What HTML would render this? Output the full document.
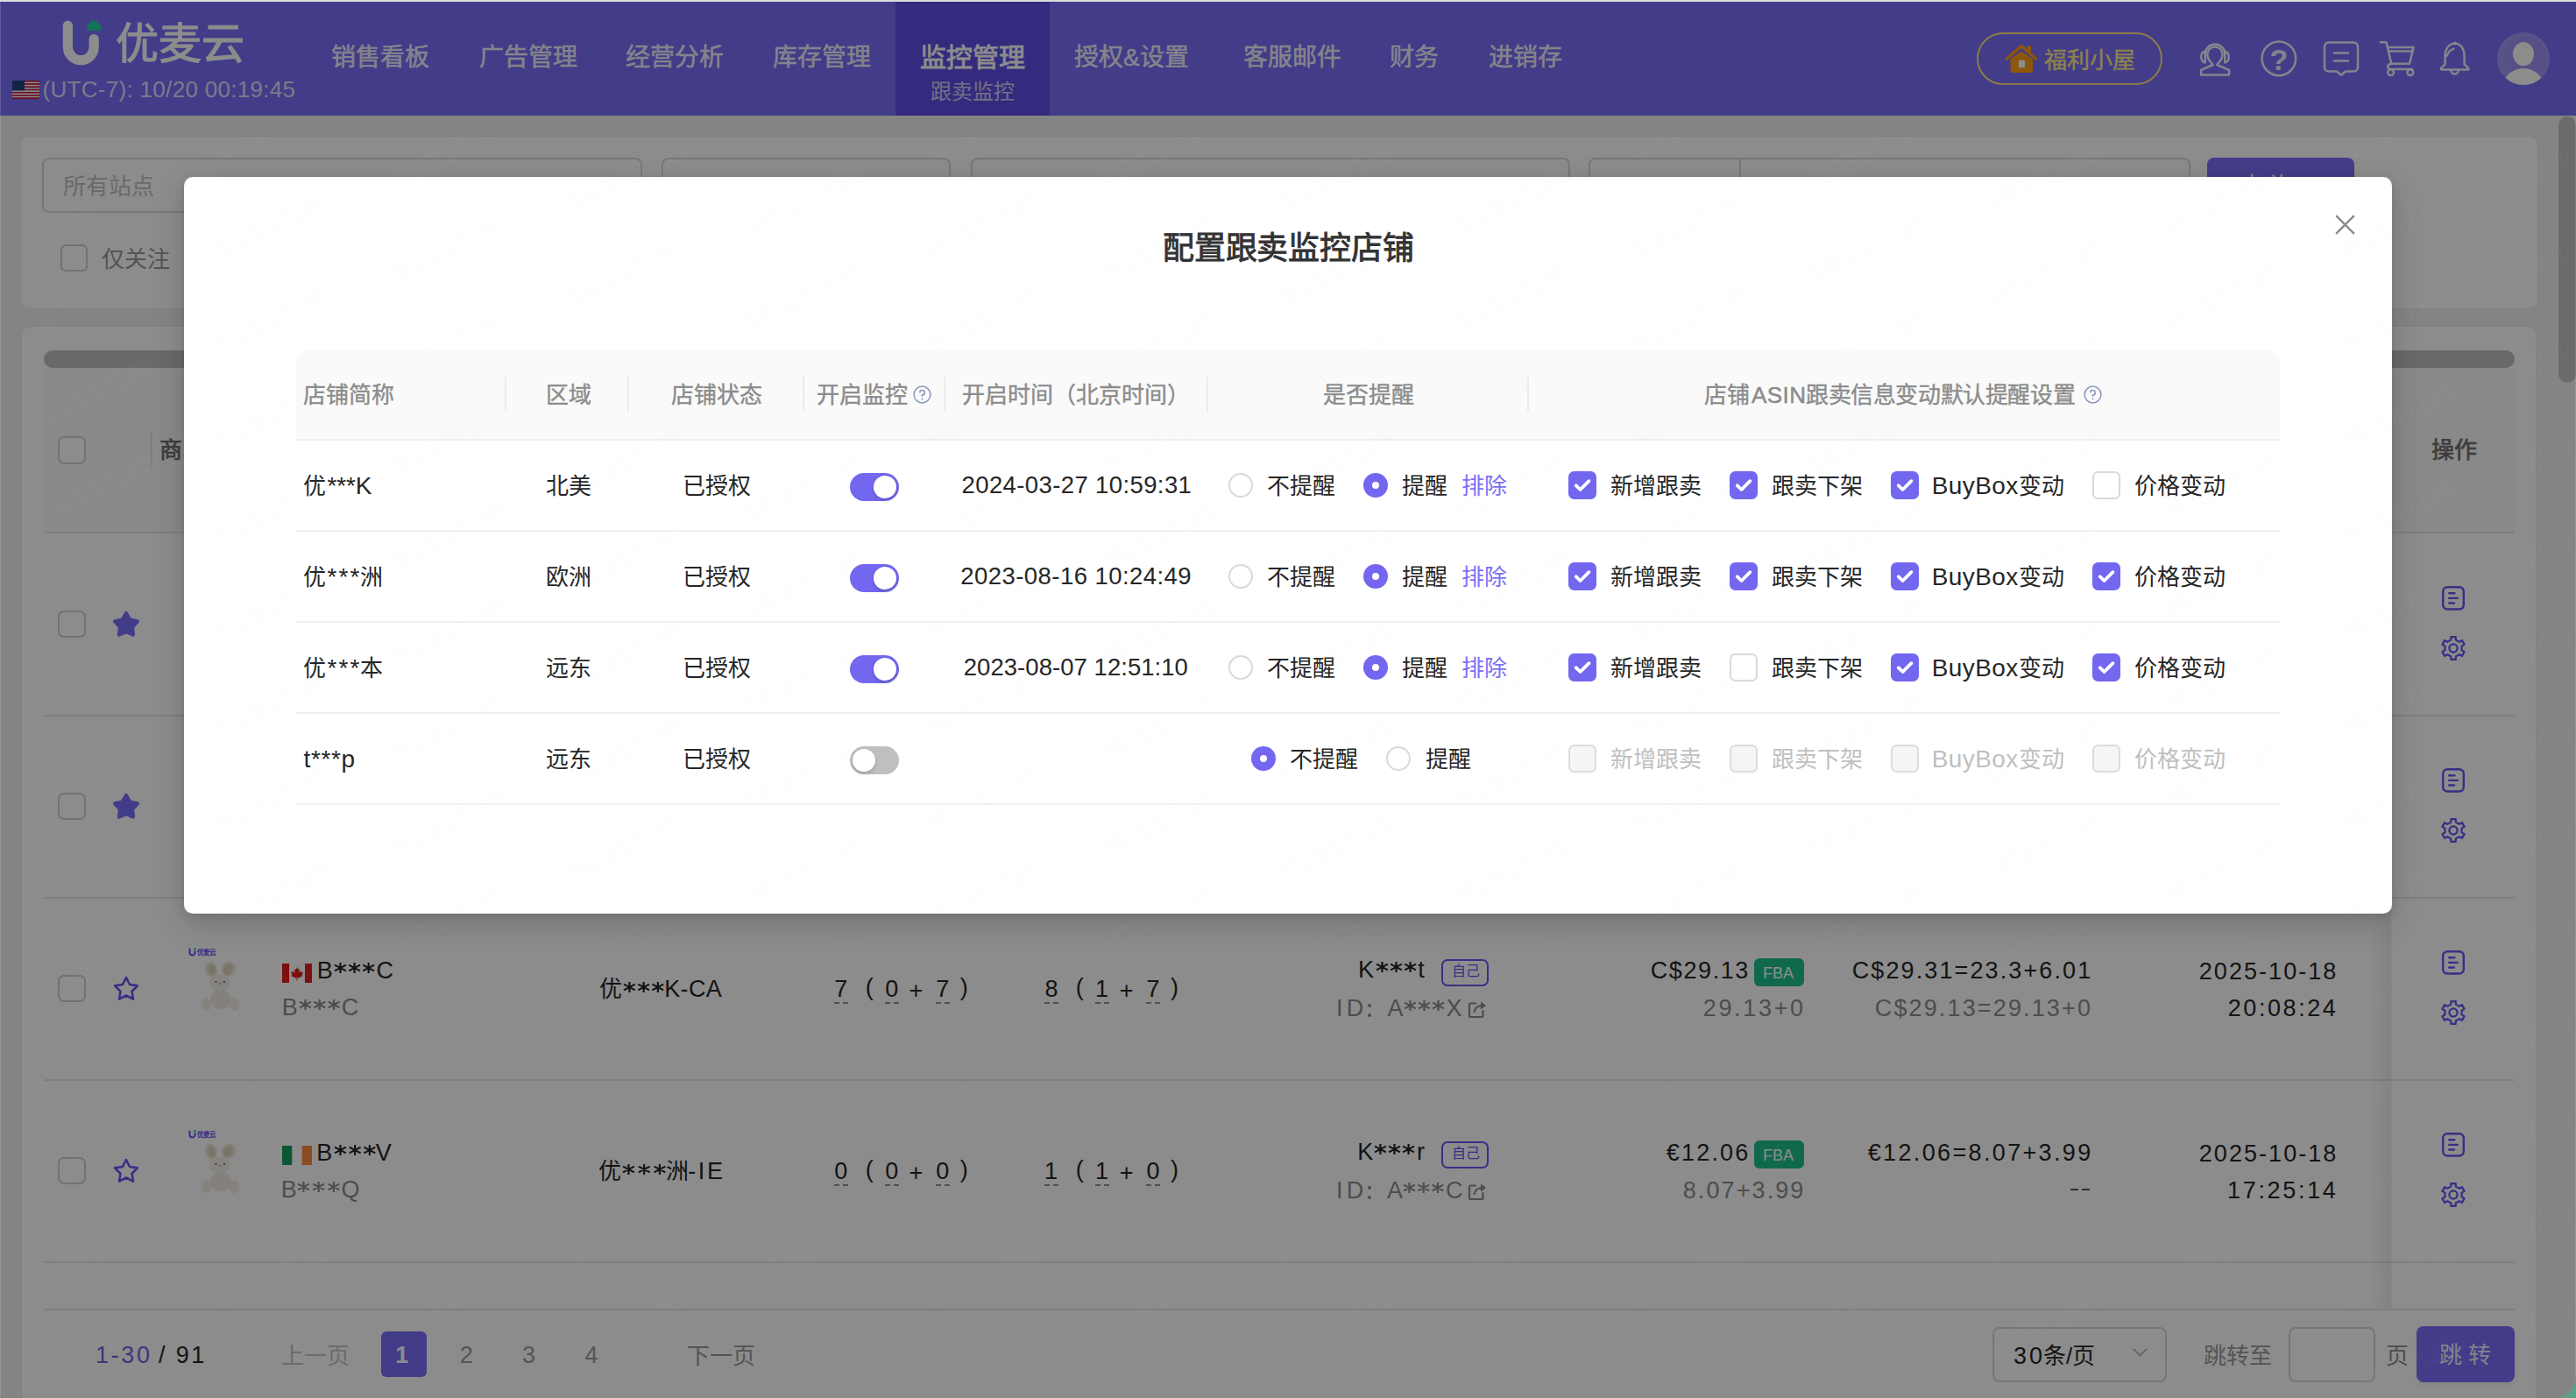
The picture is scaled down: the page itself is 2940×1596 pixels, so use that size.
<!DOCTYPE html>
<html lang="zh-CN"><head><meta charset="utf-8"><title>配置跟卖监控店铺</title><style>
*{margin:0;padding:0;box-sizing:border-box}
html,body{width:2940px;height:1596px;overflow:hidden}
body{position:relative;background:#f1f1f1;font-family:"Liberation Sans",sans-serif;color:#262626}
.a{position:absolute;white-space:nowrap}
svg.a{overflow:visible}
.wm{position:absolute;font-size:28px;line-height:28px;color:rgba(215,215,215,.045);transform:rotate(-25.5deg);transform-origin:0 24px;white-space:nowrap}
</style></head>
<body>
<div class="a" style="left:0px;top:0px;width:2940px;height:132px;background:#7a6ef8"></div>
<div class="a" style="left:1022px;top:0px;width:176px;height:132px;background:#5f4fe6"></div>
<svg class="a" style="left:60px;top:18px" width="60" height="60" viewBox="0 0 60 60"><path d="M17.4 11.1 V35.8 A14.9 14.9 0 0 0 47.2 35.8 V26.5" fill="none" stroke="#fff" stroke-width="11.2" stroke-linecap="round"/><g fill="#22cfa0"><circle cx="43.3" cy="12.8" r="4.2"/><circle cx="47.3" cy="10" r="4.9"/><circle cx="51.3" cy="12.8" r="4.2"/><rect x="39.5" y="12.5" width="15.5" height="4.6" rx="2"/></g></svg>
<div class="a" style="left:132px;top:26px;font-size:49px;line-height:49px;color:#fff;font-weight:400;-webkit-text-stroke:1.2px #fff">优麦云</div>
<svg class="a" style="left:14px;top:92px" width="31" height="21" viewBox="0 0 31 21"><rect x="0" y="0.00" width="31" height="1.67" fill="#d0112b"/><rect x="0" y="1.62" width="31" height="1.67" fill="#fff"/><rect x="0" y="3.23" width="31" height="1.67" fill="#d0112b"/><rect x="0" y="4.85" width="31" height="1.67" fill="#fff"/><rect x="0" y="6.46" width="31" height="1.67" fill="#d0112b"/><rect x="0" y="8.08" width="31" height="1.67" fill="#fff"/><rect x="0" y="9.69" width="31" height="1.67" fill="#d0112b"/><rect x="0" y="11.31" width="31" height="1.67" fill="#fff"/><rect x="0" y="12.92" width="31" height="1.67" fill="#d0112b"/><rect x="0" y="14.54" width="31" height="1.67" fill="#fff"/><rect x="0" y="16.15" width="31" height="1.67" fill="#d0112b"/><rect x="0" y="17.77" width="31" height="1.67" fill="#fff"/><rect x="0" y="19.38" width="31" height="1.67" fill="#d0112b"/><rect x="0" y="0" width="14" height="11.3" fill="#23407f"/></svg>
<div class="a" style="left:48.50px;top:88.88px;font-size:26px;line-height:26px;color:rgba(255,255,255,.8);font-weight:400;letter-spacing:0.307px;">(UTC-7): 10/20 00:19:45</div>
<div class="a" style="left:378px;top:52px;font-size:28px;line-height:28px;color:rgba(255,255,255,.88);font-weight:400;-webkit-text-stroke:0.5px rgba(255,255,255,.88)">销售看板</div>
<div class="a" style="left:547px;top:52px;font-size:28px;line-height:28px;color:rgba(255,255,255,.88);font-weight:400;-webkit-text-stroke:0.5px rgba(255,255,255,.88)">广告管理</div>
<div class="a" style="left:714px;top:52px;font-size:28px;line-height:28px;color:rgba(255,255,255,.88);font-weight:400;-webkit-text-stroke:0.5px rgba(255,255,255,.88)">经营分析</div>
<div class="a" style="left:882px;top:52px;font-size:28px;line-height:28px;color:rgba(255,255,255,.88);font-weight:400;-webkit-text-stroke:0.5px rgba(255,255,255,.88)">库存管理</div>
<div class="a" style="left:1226px;top:52px;font-size:28px;line-height:28px;color:rgba(255,255,255,.88);font-weight:400;-webkit-text-stroke:0.5px rgba(255,255,255,.88)">授权&amp;设置</div>
<div class="a" style="left:1419px;top:52px;font-size:28px;line-height:28px;color:rgba(255,255,255,.88);font-weight:400;-webkit-text-stroke:0.5px rgba(255,255,255,.88)">客服邮件</div>
<div class="a" style="left:1586px;top:52px;font-size:28px;line-height:28px;color:rgba(255,255,255,.88);font-weight:400;-webkit-text-stroke:0.5px rgba(255,255,255,.88)">财务</div>
<div class="a" style="left:1699px;top:52px;font-size:28px;line-height:28px;color:rgba(255,255,255,.88);font-weight:400;-webkit-text-stroke:0.5px rgba(255,255,255,.88)">进销存</div>
<div class="a" style="left:1050px;top:50.5px;font-size:30px;line-height:30px;color:#fff;font-weight:400;-webkit-text-stroke:0.8px #fff">监控管理</div>
<div class="a" style="left:1062px;top:93px;font-size:24px;line-height:24px;color:rgba(255,255,255,.72);font-weight:400;">跟卖监控</div>
<div class="a" style="left:2256px;top:37px;width:212px;height:60px;border:2.5px solid #ffe27f;border-radius:30px"></div>
<svg class="a" style="left:2288px;top:50px" width="38" height="34" viewBox="0 0 38 34"><path d="M6.6 17.6 L19.1 8.4 L32 17.6 V30.8 A2.2 2.2 0 0 1 29.8 33 H8.8 A2.2 2.2 0 0 1 6.6 30.8 Z" fill="#ff9d14"/><path d="M2.5 17 L19 2.5 L35.5 17" fill="none" stroke="#ff9d14" stroke-width="3.6" stroke-linecap="round" stroke-linejoin="round"/><rect x="25.5" y="2.3" width="4.5" height="8" rx="1" fill="#ff9d14"/><rect x="15.8" y="18.8" width="7.2" height="8.5" rx="1" fill="#fff"/></svg>
<div class="a" style="left:2333px;top:56px;font-size:26px;line-height:26px;color:#ffeb8a;font-weight:400;-webkit-text-stroke:0.4px #ffeb8a">福利小屋</div>
<svg class="a" style="left:2511px;top:47px" width="34" height="40" viewBox="0 0 34 40"><path fill="none" stroke="rgba(255,255,255,.9)" stroke-width="2.5" stroke-linecap="round" stroke-linejoin="round" d="M14.6 27 L10.2 21.5 Q8.3 18.5 8.3 15 A8.6 8.6 0 0 1 25.5 15 Q25.5 18.5 23.6 21.5 L19.3 27 L33 33 V38.5 H1 V33 Z"/><path fill="none" stroke="rgba(255,255,255,.9)" stroke-width="2.5" stroke-linecap="round" stroke-linejoin="round" d="M5.6 13.5 A11.5 11.5 0 0 1 28.4 13.5"/><path fill="none" stroke="rgba(255,255,255,.9)" stroke-width="2.5" stroke-linecap="round" stroke-linejoin="round" d="M5.8 11.8 Q1.2 12.5 1.2 18 Q1.2 23.6 5.8 24.4 Z M28.2 11.8 Q32.8 12.5 32.8 18 Q32.8 23.6 28.2 24.4 Z"/></svg>
<svg class="a" style="left:2580px;top:46px" width="42" height="42" viewBox="0 0 42 42"><circle fill="none" stroke="rgba(255,255,255,.9)" stroke-width="2.5" stroke-linecap="round" stroke-linejoin="round" cx="20.9" cy="20.85" r="19.3"/><text x="21" y="33.6" text-anchor="middle" font-family="Liberation Sans" font-weight="700" font-size="34" fill="rgba(255,255,255,.9)">?</text></svg>
<svg class="a" style="left:2652px;top:47px" width="41" height="40" viewBox="0 0 41 40"><path fill="none" stroke="rgba(255,255,255,.9)" stroke-width="2.5" stroke-linecap="round" stroke-linejoin="round" d="M5.5 1.5 H34.5 A4.5 4.5 0 0 1 39 6 V30 A4.5 4.5 0 0 1 34.5 34.5 H25 L20 38.7 L15 34.5 H5.5 A4.5 4.5 0 0 1 1 30 V6 A4.5 4.5 0 0 1 5.5 1.5 Z"/><path fill="none" stroke="rgba(255,255,255,.9)" stroke-width="2.5" stroke-linecap="round" stroke-linejoin="round" d="M12 13.6 H28 M12 22.5 H28"/></svg>
<svg class="a" style="left:2716px;top:47px" width="41" height="40" viewBox="0 0 41 40"><path fill="none" stroke="rgba(255,255,255,.9)" stroke-width="2.5" stroke-linecap="round" stroke-linejoin="round" d="M0.8 1.3 H7.5 L13.3 25.8 H34 L38.6 7 H9"/><path fill="none" stroke="rgba(255,255,255,.9)" stroke-width="2.5" stroke-linecap="round" stroke-linejoin="round" d="M10.3 11.6 H37.5"/><path fill="none" stroke="rgba(255,255,255,.9)" stroke-width="2.5" stroke-linecap="round" stroke-linejoin="round" d="M13.3 25.8 Q9.2 26.2 9.2 29 Q9.2 32 12.8 32 H37.3"/><circle fill="none" stroke="rgba(255,255,255,.9)" stroke-width="2.5" stroke-linecap="round" stroke-linejoin="round" cx="12.6" cy="35.7" r="3.4"/><circle fill="none" stroke="rgba(255,255,255,.9)" stroke-width="2.5" stroke-linecap="round" stroke-linejoin="round" cx="34.9" cy="35.7" r="3.4"/></svg>
<svg class="a" style="left:2785px;top:47px" width="34" height="40" viewBox="0 0 34 40"><path fill="none" stroke="rgba(255,255,255,.9)" stroke-width="2.5" stroke-linecap="round" stroke-linejoin="round" d="M16.6 2.6 C24 3, 27.6 9.5, 27.6 17 V26.5 L32 30.6 Q33 32 31.6 32.5 H1.6 Q0.2 32 1.2 30.6 L5.6 26.5 V17 C5.6 9.5, 9.2 3, 16.6 2.6 Z"/><path fill="none" stroke="rgba(255,255,255,.9)" stroke-width="2.5" stroke-linecap="round" stroke-linejoin="round" d="M12.6 33.6 A4 4 0 0 0 20.6 33.6"/><path fill="none" stroke="rgba(255,255,255,.9)" stroke-width="2.5" stroke-linecap="round" stroke-linejoin="round" d="M7.9 16.5 Q9.6 10.5 15.2 8.9"/><circle cx="16.6" cy="2.5" r="2" fill="rgba(255,255,255,.9)"/></svg>
<svg class="a" style="left:2850px;top:37px" width="60" height="60" viewBox="0 0 60 60"><defs><clipPath id="av"><circle cx="30" cy="30" r="30"/></clipPath></defs><circle cx="30" cy="30" r="30" fill="#a398f6"/><circle cx="32" cy="29" r="25" fill="#9e92f4"/><g clip-path="url(#av)"><ellipse cx="30" cy="24.6" rx="12" ry="13.5" fill="#fff"/><ellipse cx="30" cy="64" rx="24" ry="23" fill="#fff"/></g></svg>
<div class="a" style="left:24px;top:156px;width:2872px;height:196px;background:#fff;border-radius:10px;box-shadow:0 0 3px rgba(0,0,0,.06)"></div>
<div class="a" style="left:48px;top:180px;width:685px;height:63px;border:2px solid #d9d9d9;border-radius:8px;background:#fff"></div>
<div class="a" style="left:72px;top:200px;font-size:26px;line-height:26px;color:#bfbfbf;font-weight:400;">所有站点</div>
<div class="a" style="left:779px;top:200px;font-size:26px;line-height:26px;color:#bfbfbf;font-weight:400;">全部店铺</div>
<div class="a" style="left:1132px;top:200px;font-size:26px;line-height:26px;color:#bfbfbf;font-weight:400;">请输入内容</div>
<div class="a" style="left:1837px;top:200px;font-size:26px;line-height:26px;color:#bfbfbf;font-weight:400;">请选择</div>
<div class="a" style="left:755px;top:180px;width:330px;height:63px;border:2px solid #d9d9d9;border-radius:8px;background:#fff"></div>
<div class="a" style="left:1108px;top:180px;width:684px;height:63px;border:2px solid #d9d9d9;border-radius:8px;background:#fff"></div>
<div class="a" style="left:1813px;top:180px;width:687px;height:63px;border:2px solid #d9d9d9;border-radius:8px;background:#fff"></div>
<div class="a" style="left:1985px;top:182px;width:2px;height:59px;background:#d9d9d9"></div>
<div class="a" style="left:2519px;top:180px;width:168px;height:63px;background:#7a6ef8;border-radius:8px"></div>
<div class="a" style="left:2557px;top:199px;font-size:26px;line-height:26px;color:#fff;font-weight:400;">查&nbsp;询</div>
<div class="a" style="left:69px;top:279px;width:31px;height:31px;border:2px solid #d0d0d0;border-radius:6px;background:#fff"></div>
<div class="a" style="left:116px;top:283px;font-size:26px;line-height:26px;color:#999;font-weight:400;">仅关注</div>
<div class="a" style="left:25px;top:373px;width:2869px;height:1300px;background:#fff;border-radius:10px;box-shadow:0 0 3px rgba(0,0,0,.06)"></div>
<div class="a" style="left:50px;top:400px;width:2820px;height:20px;background:#c0c0c0;border-radius:10px"></div>
<div class="a" style="left:50px;top:420px;width:2820px;height:188px;background:#fafafa"></div>
<div class="a" style="left:66px;top:498px;width:32px;height:32px;border:2px solid #cfcfcf;border-radius:7px;background:#fff"></div>
<div class="a" style="left:172px;top:493px;width:2px;height:42px;background:#e3e3e3"></div>
<div class="a" style="left:182px;top:501px;font-size:26px;line-height:26px;color:#6e6e6e;font-weight:400;-webkit-text-stroke:0.7px #6e6e6e">商</div>
<div class="a" style="left:2775px;top:501px;font-size:26px;line-height:26px;color:#6e6e6e;font-weight:400;-webkit-text-stroke:0.7px #6e6e6e">操作</div>
<div class="a" style="left:50px;top:607px;width:2820px;height:2px;background:#e8e8e8"></div>
<div class="a" style="left:50px;top:816px;width:2820px;height:2px;background:#e8e8e8"></div>
<div class="a" style="left:50px;top:1024px;width:2820px;height:2px;background:#e8e8e8"></div>
<div class="a" style="left:50px;top:1232px;width:2820px;height:2px;background:#e8e8e8"></div>
<div class="a" style="left:50px;top:1440px;width:2820px;height:2px;background:#e8e8e8"></div>
<div class="a" style="left:50px;top:1494px;width:2820px;height:2px;background:#e8e8e8"></div>
<div class="a" style="left:2704px;top:420px;width:25px;height:1074px;background:linear-gradient(to left, rgba(0,0,0,.07), rgba(0,0,0,0))"></div>
<div class="a" style="left:2729px;top:420px;width:1px;height:1074px;background:rgba(0,0,0,.03)"></div>
<div class="a" style="left:66px;top:697px;width:32px;height:31px;border:2px solid #cfcfcf;border-radius:7px;background:#fff"></div>
<svg class="a" style="left:128px;top:697px" width="32" height="32" viewBox="0 0 32 32"><polygon fill="#7a6ef8" stroke="#7a6ef8" stroke-width="4.2" stroke-linejoin="round" points="16.00,3.00 20.35,10.61 28.93,12.40 23.04,18.89 23.99,27.60 16.00,24.00 8.01,27.60 8.96,18.89 3.07,12.40 11.65,10.61"/></svg>
<svg class="a" style="left:2787px;top:669px" width="26" height="28" viewBox="0 0 26 28"><rect fill="none" stroke="#6556f2" stroke-width="2.4" stroke-linecap="round" stroke-linejoin="round" x="1.2" y="1.2" width="23.6" height="25.3" rx="5"/><path fill="none" stroke="#6556f2" stroke-width="2.4" stroke-linecap="round" stroke-linejoin="round" d="M8.2 8.3 H14.4 M8.2 13.9 H17.8 M8.2 19.5 H14"/></svg>
<svg class="a" style="left:2786px;top:726px" width="28" height="28" viewBox="0 0 28 28"><polygon fill="none" stroke="#6556f2" stroke-width="2.3" stroke-linejoin="miter" points="11.13,4.63 11.48,1.04 16.52,1.04 16.87,4.63 20.68,6.83 23.96,5.34 26.48,9.70 23.55,11.80 23.55,16.20 26.48,18.30 23.96,22.66 20.68,21.17 16.87,23.37 16.52,26.96 11.48,26.96 11.13,23.37 7.32,21.17 4.04,22.66 1.52,18.30 4.45,16.20 4.45,11.80 1.52,9.70 4.04,5.34 7.32,6.83"/><circle fill="none" stroke="#6556f2" stroke-width="2.3" stroke-linejoin="miter" cx="14" cy="14" r="4.6"/></svg>
<div class="a" style="left:66px;top:905px;width:32px;height:31px;border:2px solid #cfcfcf;border-radius:7px;background:#fff"></div>
<svg class="a" style="left:128px;top:905px" width="32" height="32" viewBox="0 0 32 32"><polygon fill="#7a6ef8" stroke="#7a6ef8" stroke-width="4.2" stroke-linejoin="round" points="16.00,3.00 20.35,10.61 28.93,12.40 23.04,18.89 23.99,27.60 16.00,24.00 8.01,27.60 8.96,18.89 3.07,12.40 11.65,10.61"/></svg>
<svg class="a" style="left:2787px;top:877px" width="26" height="28" viewBox="0 0 26 28"><rect fill="none" stroke="#6556f2" stroke-width="2.4" stroke-linecap="round" stroke-linejoin="round" x="1.2" y="1.2" width="23.6" height="25.3" rx="5"/><path fill="none" stroke="#6556f2" stroke-width="2.4" stroke-linecap="round" stroke-linejoin="round" d="M8.2 8.3 H14.4 M8.2 13.9 H17.8 M8.2 19.5 H14"/></svg>
<svg class="a" style="left:2786px;top:934px" width="28" height="28" viewBox="0 0 28 28"><polygon fill="none" stroke="#6556f2" stroke-width="2.3" stroke-linejoin="miter" points="11.13,4.63 11.48,1.04 16.52,1.04 16.87,4.63 20.68,6.83 23.96,5.34 26.48,9.70 23.55,11.80 23.55,16.20 26.48,18.30 23.96,22.66 20.68,21.17 16.87,23.37 16.52,26.96 11.48,26.96 11.13,23.37 7.32,21.17 4.04,22.66 1.52,18.30 4.45,16.20 4.45,11.80 1.52,9.70 4.04,5.34 7.32,6.83"/><circle fill="none" stroke="#6556f2" stroke-width="2.3" stroke-linejoin="miter" cx="14" cy="14" r="4.6"/></svg>
<div class="a" style="left:66px;top:1113px;width:32px;height:31px;border:2px solid #cfcfcf;border-radius:7px;background:#fff"></div>
<svg class="a" style="left:128px;top:1113px" width="32" height="32" viewBox="0 0 32 32"><polygon fill="none" stroke="#6556f2" stroke-width="2.6" stroke-linejoin="round" points="16.00,3.00 20.06,11.02 28.93,12.40 22.56,18.73 23.99,27.60 16.00,23.50 8.01,27.60 9.44,18.73 3.07,12.40 11.94,11.02"/></svg>
<svg class="a" style="left:2787px;top:1085px" width="26" height="28" viewBox="0 0 26 28"><rect fill="none" stroke="#6556f2" stroke-width="2.4" stroke-linecap="round" stroke-linejoin="round" x="1.2" y="1.2" width="23.6" height="25.3" rx="5"/><path fill="none" stroke="#6556f2" stroke-width="2.4" stroke-linecap="round" stroke-linejoin="round" d="M8.2 8.3 H14.4 M8.2 13.9 H17.8 M8.2 19.5 H14"/></svg>
<svg class="a" style="left:2786px;top:1142px" width="28" height="28" viewBox="0 0 28 28"><polygon fill="none" stroke="#6556f2" stroke-width="2.3" stroke-linejoin="miter" points="11.13,4.63 11.48,1.04 16.52,1.04 16.87,4.63 20.68,6.83 23.96,5.34 26.48,9.70 23.55,11.80 23.55,16.20 26.48,18.30 23.96,22.66 20.68,21.17 16.87,23.37 16.52,26.96 11.48,26.96 11.13,23.37 7.32,21.17 4.04,22.66 1.52,18.30 4.45,16.20 4.45,11.80 1.52,9.70 4.04,5.34 7.32,6.83"/><circle fill="none" stroke="#6556f2" stroke-width="2.3" stroke-linejoin="miter" cx="14" cy="14" r="4.6"/></svg>
<div class="a" style="left:66px;top:1321px;width:32px;height:31px;border:2px solid #cfcfcf;border-radius:7px;background:#fff"></div>
<svg class="a" style="left:128px;top:1321px" width="32" height="32" viewBox="0 0 32 32"><polygon fill="none" stroke="#6556f2" stroke-width="2.6" stroke-linejoin="round" points="16.00,3.00 20.06,11.02 28.93,12.40 22.56,18.73 23.99,27.60 16.00,23.50 8.01,27.60 9.44,18.73 3.07,12.40 11.94,11.02"/></svg>
<svg class="a" style="left:2787px;top:1293px" width="26" height="28" viewBox="0 0 26 28"><rect fill="none" stroke="#6556f2" stroke-width="2.4" stroke-linecap="round" stroke-linejoin="round" x="1.2" y="1.2" width="23.6" height="25.3" rx="5"/><path fill="none" stroke="#6556f2" stroke-width="2.4" stroke-linecap="round" stroke-linejoin="round" d="M8.2 8.3 H14.4 M8.2 13.9 H17.8 M8.2 19.5 H14"/></svg>
<svg class="a" style="left:2786px;top:1350px" width="28" height="28" viewBox="0 0 28 28"><polygon fill="none" stroke="#6556f2" stroke-width="2.3" stroke-linejoin="miter" points="11.13,4.63 11.48,1.04 16.52,1.04 16.87,4.63 20.68,6.83 23.96,5.34 26.48,9.70 23.55,11.80 23.55,16.20 26.48,18.30 23.96,22.66 20.68,21.17 16.87,23.37 16.52,26.96 11.48,26.96 11.13,23.37 7.32,21.17 4.04,22.66 1.52,18.30 4.45,16.20 4.45,11.80 1.52,9.70 4.04,5.34 7.32,6.83"/><circle fill="none" stroke="#6556f2" stroke-width="2.3" stroke-linejoin="miter" cx="14" cy="14" r="4.6"/></svg>
<svg class="a" style="left:207px;top:1081px" width="70" height="78" viewBox="0 0 70 78"><path d="M9.5 2.5 V6.5 A3 3 0 0 0 15.5 6.5 V5" fill="none" stroke="#6556f2" stroke-width="2" stroke-linecap="round"/><circle cx="15.6" cy="2.2" r="1.3" fill="#22cfa0"/><text x="18" y="8.8" font-size="7.5" fill="#6556f2" font-weight="700">优麦云</text><ellipse cx="34" cy="25.7" rx="7" ry="8.8" fill="#ece6d8" transform="rotate(-15 34 25.7)"/><ellipse cx="54" cy="25" rx="7.8" ry="8.6" fill="#ece6d8" transform="rotate(25 54 25)"/><ellipse cx="34.5" cy="26.5" rx="4" ry="6" fill="#dcd2bd" transform="rotate(-15 34 25.7)"/><ellipse cx="53.5" cy="26" rx="4.5" ry="6" fill="#dcd2bd" transform="rotate(25 54 25)"/><ellipse cx="45" cy="60" rx="12" ry="11.3" fill="#f1ece2"/><ellipse cx="43.8" cy="41" rx="12.2" ry="9.8" fill="#f4f0e8"/><ellipse cx="28.4" cy="65.8" rx="5.8" ry="7.4" fill="#f3efe6"/><ellipse cx="60.6" cy="65.8" rx="5.8" ry="7.4" fill="#f3efe6"/><circle cx="39.5" cy="40" r="1" fill="#444"/><circle cx="49" cy="40" r="1" fill="#444"/><ellipse cx="44.3" cy="42" rx="1.8" ry="1" fill="#f0a0a8"/></svg>
<svg class="a" style="left:322px;top:1100px" width="34" height="22" viewBox="0 0 34 22"><rect width="34" height="22" fill="#fff"/><rect width="8" height="22" fill="#e01b1b"/><rect x="26" width="8" height="22" fill="#e01b1b"/><path d="M17 4 L18.3 7 L20 6.3 L19.4 10.5 L21.8 8.6 L22.3 10 L24 9.8 L22.6 13.3 L23.7 14 L19 16.5 L17.4 16 V19.5 H16.6 V16 L15 16.5 L10.3 14 L11.4 13.3 L10 9.8 L11.7 10 L12.2 8.6 L14.6 10.5 L14 6.3 L15.7 7 Z" fill="#e01b1b"/></svg>
<div class="a" style="left:361.65px;top:1094.72px;font-size:27px;line-height:27px;color:#262626">B</div>
<svg class="a" style="left:381.90px;top:1098.50px" width="45.1" height="12" viewBox="0 0 45.10 12"><path d="M6.45 0 V12 M0.05 2.6 L12.85 9.4 M0.05 9.4 L12.85 2.6 M22.55 0 V12 M16.15 2.6 L28.95 9.4 M16.15 9.4 L28.95 2.6 M38.65 0 V12 M32.25 2.6 L45.05 9.4 M32.25 9.4 L45.05 2.6" stroke="#262626" stroke-width="2.2" fill="none"/></svg>
<div class="a" style="left:429.55px;top:1094.72px;font-size:27px;line-height:27px;color:#262626">C</div>
<div class="a" style="left:321.75px;top:1136.72px;font-size:27px;line-height:27px;color:#8c8c8c">B</div>
<svg class="a" style="left:341.70px;top:1140.50px" width="45.5" height="12" viewBox="0 0 45.50 12"><path d="M6.45 0 V12 M0.05 2.6 L12.85 9.4 M0.05 9.4 L12.85 2.6 M22.75 0 V12 M16.35 2.6 L29.15 9.4 M16.35 9.4 L29.15 2.6 M39.05 0 V12 M32.65 2.6 L45.45 9.4 M32.65 9.4 L45.45 2.6" stroke="#8c8c8c" stroke-width="2.2" fill="none"/></svg>
<div class="a" style="left:389.75px;top:1136.72px;font-size:27px;line-height:27px;color:#8c8c8c">C</div>
<div class="a" style="left:684.4px;top:1116px;font-size:26px;line-height:26px;color:#262626;font-weight:400;">优</div>
<svg class="a" style="left:711.80px;top:1120.50px" width="45.3" height="12" viewBox="0 0 45.30 12"><path d="M6.45 0 V12 M0.05 2.6 L12.85 9.4 M0.05 9.4 L12.85 2.6 M22.65 0 V12 M16.25 2.6 L29.05 9.4 M16.25 9.4 L29.05 2.6 M38.85 0 V12 M32.45 2.6 L45.25 9.4 M32.45 9.4 L45.25 2.6" stroke="#262626" stroke-width="2.2" fill="none"/></svg>
<div class="a" style="left:758.25px;top:1115.92px;font-size:27px;line-height:27px;color:#262626;font-weight:400;letter-spacing:0.317px;">K-CA</div>
<div class="a" style="left:952.30px;top:1115.99px;font-size:27px;line-height:27px;color:#262626">7</div>
<div class="a" style="left:951.8px;top:1143.7px;width:6px;height:2.4px;background:#8896a0"></div>
<div class="a" style="left:961.8px;top:1143.7px;width:6px;height:2.4px;background:#8896a0"></div>
<div class="a" style="left:1010.30px;top:1115.99px;font-size:27px;line-height:27px;color:#262626">0</div>
<div class="a" style="left:1009.8px;top:1143.7px;width:6px;height:2.4px;background:#8896a0"></div>
<div class="a" style="left:1019.8px;top:1143.7px;width:6px;height:2.4px;background:#8896a0"></div>
<div class="a" style="left:1068.30px;top:1115.99px;font-size:27px;line-height:27px;color:#262626">7</div>
<div class="a" style="left:1067.8px;top:1143.7px;width:6px;height:2.4px;background:#8896a0"></div>
<div class="a" style="left:1077.8px;top:1143.7px;width:6px;height:2.4px;background:#8896a0"></div>
<div class="a" style="left:987.65px;top:1114.22px;font-size:27px;line-height:27px;color:#262626">(</div>
<div class="a" style="left:1037.55px;top:1117.72px;font-size:27px;line-height:27px;color:#262626">+</div>
<div class="a" style="left:1095.75px;top:1114.22px;font-size:27px;line-height:27px;color:#262626">)</div>
<div class="a" style="left:1192.50px;top:1115.99px;font-size:27px;line-height:27px;color:#262626">8</div>
<div class="a" style="left:1192px;top:1143.7px;width:6px;height:2.4px;background:#8896a0"></div>
<div class="a" style="left:1202px;top:1143.7px;width:6px;height:2.4px;background:#8896a0"></div>
<div class="a" style="left:1250.12px;top:1115.99px;font-size:27px;line-height:27px;color:#262626">1</div>
<div class="a" style="left:1250px;top:1143.7px;width:6px;height:2.4px;background:#8896a0"></div>
<div class="a" style="left:1260px;top:1143.7px;width:6px;height:2.4px;background:#8896a0"></div>
<div class="a" style="left:1308.50px;top:1115.99px;font-size:27px;line-height:27px;color:#262626">7</div>
<div class="a" style="left:1308px;top:1143.7px;width:6px;height:2.4px;background:#8896a0"></div>
<div class="a" style="left:1318px;top:1143.7px;width:6px;height:2.4px;background:#8896a0"></div>
<div class="a" style="left:1227.85px;top:1114.22px;font-size:27px;line-height:27px;color:#262626">(</div>
<div class="a" style="left:1277.75px;top:1117.72px;font-size:27px;line-height:27px;color:#262626">+</div>
<div class="a" style="left:1335.95px;top:1114.22px;font-size:27px;line-height:27px;color:#262626">)</div>
<div class="a" style="left:1550.05px;top:1094.32px;font-size:27px;line-height:27px;color:#262626">K</div>
<svg class="a" style="left:1570.60px;top:1098.10px" width="45.0" height="12" viewBox="0 0 45.00 12"><path d="M6.45 0 V12 M0.05 2.6 L12.85 9.4 M0.05 9.4 L12.85 2.6 M22.50 0 V12 M16.10 2.6 L28.90 9.4 M16.10 9.4 L28.90 2.6 M38.55 0 V12 M32.15 2.6 L44.95 9.4 M32.15 9.4 L44.95 2.6" stroke="#262626" stroke-width="2.2" fill="none"/></svg>
<div class="a" style="left:1618.20px;top:1094.32px;font-size:27px;line-height:27px;color:#262626">t</div>
<div class="a" style="left:1645px;top:1094.5px;width:54px;height:31.5px;border:2px solid #6556f2;border-radius:7px"></div>
<div class="a" style="left:1657px;top:1101px;font-size:16px;line-height:16px;color:#6556f2;font-weight:400;">自己</div>
<div class="a" style="left:1525.00px;top:1137.82px;font-size:27px;line-height:27px;color:#8c8c8c;font-weight:400;letter-spacing:4.250px;">ID</div>
<div class="a" style="left:1561px;top:1146px;width:4px;height:4px;background:#8c8c8c;border-radius:50%"></div>
<div class="a" style="left:1561px;top:1157px;width:4px;height:4px;background:#8c8c8c;border-radius:50%"></div>
<div class="a" style="left:1583.40px;top:1137.82px;font-size:27px;line-height:27px;color:#8c8c8c">A</div>
<svg class="a" style="left:1602.80px;top:1141.60px" width="45.0" height="12" viewBox="0 0 45.00 12"><path d="M6.45 0 V12 M0.05 2.6 L12.85 9.4 M0.05 9.4 L12.85 2.6 M22.50 0 V12 M16.10 2.6 L28.90 9.4 M16.10 9.4 L28.90 2.6 M38.55 0 V12 M32.15 2.6 L44.95 9.4 M32.15 9.4 L44.95 2.6" stroke="#8c8c8c" stroke-width="2.2" fill="none"/></svg>
<div class="a" style="left:1650.55px;top:1137.82px;font-size:27px;line-height:27px;color:#8c8c8c">X</div>
<svg class="a" style="left:1675px;top:1141px" width="22" height="22" viewBox="0 0 22 22"><path fill="none" stroke="#8c8c8c" stroke-width="2.2" stroke-linecap="round" stroke-linejoin="round" d="M9 4.5 H3.5 A1.5 1.5 0 0 0 2 6 V18.5 A1.5 1.5 0 0 0 3.5 20 H16 A1.5 1.5 0 0 0 17.5 18.5 V13"/><path fill="none" stroke="#8c8c8c" stroke-width="2.2" stroke-linecap="round" stroke-linejoin="round" d="M7.5 14 Q9 7 17 7"/><path d="M15 2.5 L21 7 L15 11.5 Z" fill="#8c8c8c"/></svg>
<div class="a" style="left:1883.75px;top:1094.99px;font-size:27px;line-height:27px;color:#262626;font-weight:400;letter-spacing:1.583px;">C$29.13</div>
<div class="a" style="left:2002px;top:1094px;width:57px;height:32px;background:#1fbf8c;border-radius:6px"></div>
<div class="a" style="left:2012px;top:1102px;font-size:18px;line-height:18px;color:#fff;font-weight:400;">FBA</div>
<div class="a" style="left:1943.75px;top:1137.99px;font-size:27px;line-height:27px;color:#8c8c8c;font-weight:400;letter-spacing:2.667px;">29.13+0</div>
<div class="a" style="left:2113.75px;top:1094.99px;font-size:27px;line-height:27px;color:#262626;font-weight:400;letter-spacing:2.109px;">C$29.31=23.3+6.01</div>
<div class="a" style="left:2139.75px;top:1137.99px;font-size:27px;line-height:27px;color:#8c8c8c;font-weight:400;letter-spacing:2.143px;">C$29.13=29.13+0</div>
<div class="a" style="left:2509.75px;top:1095.99px;font-size:27px;line-height:27px;color:#262626;font-weight:400;letter-spacing:2.056px;">2025-10-18</div>
<div class="a" style="left:2542.75px;top:1137.99px;font-size:27px;line-height:27px;color:#262626;font-weight:400;letter-spacing:2.571px;">20:08:24</div>
<svg class="a" style="left:207px;top:1289px" width="70" height="78" viewBox="0 0 70 78"><path d="M9.5 2.5 V6.5 A3 3 0 0 0 15.5 6.5 V5" fill="none" stroke="#6556f2" stroke-width="2" stroke-linecap="round"/><circle cx="15.6" cy="2.2" r="1.3" fill="#22cfa0"/><text x="18" y="8.8" font-size="7.5" fill="#6556f2" font-weight="700">优麦云</text><ellipse cx="34" cy="25.7" rx="7" ry="8.8" fill="#ece6d8" transform="rotate(-15 34 25.7)"/><ellipse cx="54" cy="25" rx="7.8" ry="8.6" fill="#ece6d8" transform="rotate(25 54 25)"/><ellipse cx="34.5" cy="26.5" rx="4" ry="6" fill="#dcd2bd" transform="rotate(-15 34 25.7)"/><ellipse cx="53.5" cy="26" rx="4.5" ry="6" fill="#dcd2bd" transform="rotate(25 54 25)"/><ellipse cx="45" cy="60" rx="12" ry="11.3" fill="#f1ece2"/><ellipse cx="43.8" cy="41" rx="12.2" ry="9.8" fill="#f4f0e8"/><ellipse cx="28.4" cy="65.8" rx="5.8" ry="7.4" fill="#f3efe6"/><ellipse cx="60.6" cy="65.8" rx="5.8" ry="7.4" fill="#f3efe6"/><circle cx="39.5" cy="40" r="1" fill="#444"/><circle cx="49" cy="40" r="1" fill="#444"/><ellipse cx="44.3" cy="42" rx="1.8" ry="1" fill="#f0a0a8"/></svg>
<svg class="a" style="left:322px;top:1308px" width="34" height="22" viewBox="0 0 34 22"><rect width="34" height="22" fill="#fff"/><rect width="11.3" height="22" fill="#169b62"/><rect x="22.7" width="11.3" height="22" fill="#ff883e"/></svg>
<div class="a" style="left:361.25px;top:1302.72px;font-size:27px;line-height:27px;color:#262626">B</div>
<svg class="a" style="left:381.70px;top:1306.50px" width="46.3" height="12" viewBox="0 0 46.30 12"><path d="M6.45 0 V12 M0.05 2.6 L12.85 9.4 M0.05 9.4 L12.85 2.6 M23.15 0 V12 M16.75 2.6 L29.55 9.4 M16.75 9.4 L29.55 2.6 M39.85 0 V12 M33.45 2.6 L46.25 9.4 M33.45 9.4 L46.25 2.6" stroke="#262626" stroke-width="2.2" fill="none"/></svg>
<div class="a" style="left:428.85px;top:1302.72px;font-size:27px;line-height:27px;color:#262626">V</div>
<div class="a" style="left:320.75px;top:1344.72px;font-size:27px;line-height:27px;color:#8c8c8c">B</div>
<svg class="a" style="left:340.30px;top:1348.50px" width="47.4" height="12" viewBox="0 0 47.40 12"><path d="M6.45 0 V12 M0.05 2.6 L12.85 9.4 M0.05 9.4 L12.85 2.6 M23.70 0 V12 M17.30 2.6 L30.10 9.4 M17.30 9.4 L30.10 2.6 M40.95 0 V12 M34.55 2.6 L47.35 9.4 M34.55 9.4 L47.35 2.6" stroke="#8c8c8c" stroke-width="2.2" fill="none"/></svg>
<div class="a" style="left:389.45px;top:1344.72px;font-size:27px;line-height:27px;color:#8c8c8c">Q</div>
<div class="a" style="left:683.4px;top:1324px;font-size:26px;line-height:26px;color:#262626;font-weight:400;">优</div>
<svg class="a" style="left:710.70px;top:1328.50px" width="48.4" height="12" viewBox="0 0 48.40 12"><path d="M6.45 0 V12 M0.05 2.6 L12.85 9.4 M0.05 9.4 L12.85 2.6 M24.20 0 V12 M17.80 2.6 L30.60 9.4 M17.80 9.4 L30.60 2.6 M41.95 0 V12 M35.55 2.6 L48.35 9.4 M35.55 9.4 L48.35 2.6" stroke="#262626" stroke-width="2.2" fill="none"/></svg>
<div class="a" style="left:760px;top:1324px;font-size:26px;line-height:26px;color:#262626;font-weight:400;">洲</div>
<div class="a" style="left:785.15px;top:1323.92px;font-size:27px;line-height:27px;color:#262626;font-weight:400;letter-spacing:2.650px;">-IE</div>
<div class="a" style="left:952.30px;top:1323.99px;font-size:27px;line-height:27px;color:#262626">0</div>
<div class="a" style="left:951.8px;top:1351.7px;width:6px;height:2.4px;background:#8896a0"></div>
<div class="a" style="left:961.8px;top:1351.7px;width:6px;height:2.4px;background:#8896a0"></div>
<div class="a" style="left:1010.30px;top:1323.99px;font-size:27px;line-height:27px;color:#262626">0</div>
<div class="a" style="left:1009.8px;top:1351.7px;width:6px;height:2.4px;background:#8896a0"></div>
<div class="a" style="left:1019.8px;top:1351.7px;width:6px;height:2.4px;background:#8896a0"></div>
<div class="a" style="left:1068.30px;top:1323.99px;font-size:27px;line-height:27px;color:#262626">0</div>
<div class="a" style="left:1067.8px;top:1351.7px;width:6px;height:2.4px;background:#8896a0"></div>
<div class="a" style="left:1077.8px;top:1351.7px;width:6px;height:2.4px;background:#8896a0"></div>
<div class="a" style="left:987.65px;top:1322.22px;font-size:27px;line-height:27px;color:#262626">(</div>
<div class="a" style="left:1037.55px;top:1325.72px;font-size:27px;line-height:27px;color:#262626">+</div>
<div class="a" style="left:1095.75px;top:1322.22px;font-size:27px;line-height:27px;color:#262626">)</div>
<div class="a" style="left:1192.12px;top:1323.99px;font-size:27px;line-height:27px;color:#262626">1</div>
<div class="a" style="left:1192px;top:1351.7px;width:6px;height:2.4px;background:#8896a0"></div>
<div class="a" style="left:1202px;top:1351.7px;width:6px;height:2.4px;background:#8896a0"></div>
<div class="a" style="left:1250.12px;top:1323.99px;font-size:27px;line-height:27px;color:#262626">1</div>
<div class="a" style="left:1250px;top:1351.7px;width:6px;height:2.4px;background:#8896a0"></div>
<div class="a" style="left:1260px;top:1351.7px;width:6px;height:2.4px;background:#8896a0"></div>
<div class="a" style="left:1308.50px;top:1323.99px;font-size:27px;line-height:27px;color:#262626">0</div>
<div class="a" style="left:1308px;top:1351.7px;width:6px;height:2.4px;background:#8896a0"></div>
<div class="a" style="left:1318px;top:1351.7px;width:6px;height:2.4px;background:#8896a0"></div>
<div class="a" style="left:1227.85px;top:1322.22px;font-size:27px;line-height:27px;color:#262626">(</div>
<div class="a" style="left:1277.75px;top:1325.72px;font-size:27px;line-height:27px;color:#262626">+</div>
<div class="a" style="left:1335.95px;top:1322.22px;font-size:27px;line-height:27px;color:#262626">)</div>
<div class="a" style="left:1549.25px;top:1302.32px;font-size:27px;line-height:27px;color:#262626">K</div>
<svg class="a" style="left:1569.40px;top:1306.10px" width="45.0" height="12" viewBox="0 0 45.00 12"><path d="M6.45 0 V12 M0.05 2.6 L12.85 9.4 M0.05 9.4 L12.85 2.6 M22.50 0 V12 M16.10 2.6 L28.90 9.4 M16.10 9.4 L28.90 2.6 M38.55 0 V12 M32.15 2.6 L44.95 9.4 M32.15 9.4 L44.95 2.6" stroke="#262626" stroke-width="2.2" fill="none"/></svg>
<div class="a" style="left:1616.95px;top:1302.32px;font-size:27px;line-height:27px;color:#262626">r</div>
<div class="a" style="left:1645px;top:1302.5px;width:54px;height:31.5px;border:2px solid #6556f2;border-radius:7px"></div>
<div class="a" style="left:1657px;top:1309px;font-size:16px;line-height:16px;color:#6556f2;font-weight:400;">自己</div>
<div class="a" style="left:1525.00px;top:1345.82px;font-size:27px;line-height:27px;color:#8c8c8c;font-weight:400;letter-spacing:4.250px;">ID</div>
<div class="a" style="left:1561px;top:1354px;width:4px;height:4px;background:#8c8c8c;border-radius:50%"></div>
<div class="a" style="left:1561px;top:1365px;width:4px;height:4px;background:#8c8c8c;border-radius:50%"></div>
<div class="a" style="left:1583.00px;top:1345.82px;font-size:27px;line-height:27px;color:#8c8c8c">A</div>
<svg class="a" style="left:1602.40px;top:1349.60px" width="45.4" height="12" viewBox="0 0 45.40 12"><path d="M6.45 0 V12 M0.05 2.6 L12.85 9.4 M0.05 9.4 L12.85 2.6 M22.70 0 V12 M16.30 2.6 L29.10 9.4 M16.30 9.4 L29.10 2.6 M38.95 0 V12 M32.55 2.6 L45.35 9.4 M32.55 9.4 L45.35 2.6" stroke="#8c8c8c" stroke-width="2.2" fill="none"/></svg>
<div class="a" style="left:1650.05px;top:1345.82px;font-size:27px;line-height:27px;color:#8c8c8c">C</div>
<svg class="a" style="left:1675px;top:1349px" width="22" height="22" viewBox="0 0 22 22"><path fill="none" stroke="#8c8c8c" stroke-width="2.2" stroke-linecap="round" stroke-linejoin="round" d="M9 4.5 H3.5 A1.5 1.5 0 0 0 2 6 V18.5 A1.5 1.5 0 0 0 3.5 20 H16 A1.5 1.5 0 0 0 17.5 18.5 V13"/><path fill="none" stroke="#8c8c8c" stroke-width="2.2" stroke-linecap="round" stroke-linejoin="round" d="M7.5 14 Q9 7 17 7"/><path d="M15 2.5 L21 7 L15 11.5 Z" fill="#8c8c8c"/></svg>
<div class="a" style="left:1901.75px;top:1302.99px;font-size:27px;line-height:27px;color:#262626;font-weight:400;letter-spacing:2.200px;">€12.06</div>
<div class="a" style="left:2002px;top:1302px;width:57px;height:32px;background:#1fbf8c;border-radius:6px"></div>
<div class="a" style="left:2012px;top:1310px;font-size:18px;line-height:18px;color:#fff;font-weight:400;">FBA</div>
<div class="a" style="left:1920.75px;top:1345.99px;font-size:27px;line-height:27px;color:#8c8c8c;font-weight:400;letter-spacing:2.094px;">8.07+3.99</div>
<div class="a" style="left:2131.75px;top:1302.99px;font-size:27px;line-height:27px;color:#262626;font-weight:400;letter-spacing:2.350px;">€12.06=8.07+3.99</div>
<div class="a" style="left:2363px;top:1357px;width:9px;height:2px;background:#595959"></div>
<div class="a" style="left:2376px;top:1357px;width:9px;height:2px;background:#595959"></div>
<div class="a" style="left:2509.75px;top:1303.99px;font-size:27px;line-height:27px;color:#262626;font-weight:400;letter-spacing:2.056px;">2025-10-18</div>
<div class="a" style="left:2542.00px;top:1345.99px;font-size:27px;line-height:27px;color:#262626;font-weight:400;letter-spacing:2.679px;">17:25:14</div>
<div class="a" style="left:109.00px;top:1533.99px;font-size:27px;line-height:27px;color:#6f63e0;font-weight:400;letter-spacing:2.667px;">1-30</div>
<div class="a" style="left:181.00px;top:1533.99px;font-size:27px;line-height:27px;color:#262626;font-weight:400;letter-spacing:2.417px;">/ 91</div>
<div class="a" style="left:321px;top:1535px;font-size:26px;line-height:26px;color:#c4c4c4;font-weight:400;">上一页</div>
<div class="a" style="left:435px;top:1520px;width:52px;height:52px;background:#7a6ef8;border-radius:6px"></div>
<div class="a" style="left:451.25px;top:1533.99px;font-size:27px;line-height:27px;color:#fff;font-weight:700;letter-spacing:0.000px;">1</div>
<div class="a" style="left:524.75px;top:1533.99px;font-size:27px;line-height:27px;color:#9a9a9a;font-weight:400;letter-spacing:0.000px;">2</div>
<div class="a" style="left:596.00px;top:1533.99px;font-size:27px;line-height:27px;color:#9a9a9a;font-weight:400;letter-spacing:0.000px;">3</div>
<div class="a" style="left:667.50px;top:1533.99px;font-size:27px;line-height:27px;color:#9a9a9a;font-weight:400;letter-spacing:0.000px;">4</div>
<div class="a" style="left:784px;top:1535px;font-size:26px;line-height:26px;color:#9a9a9a;font-weight:400;">下一页</div>
<div class="a" style="left:2274px;top:1515px;width:199px;height:63px;border:2px solid #d9d9d9;border-radius:8px;background:#fff"></div>
<div class="a" style="left:2298.00px;top:1534.99px;font-size:27px;line-height:27px;color:#262626;font-weight:400;letter-spacing:3.000px;">30</div>
<div class="a" style="left:2332px;top:1535px;font-size:26px;line-height:26px;color:#262626;font-weight:400;">条/页</div>
<svg class="a" style="left:2434px;top:1539px" width="17" height="10" viewBox="0 0 17 10"><path d="M1 1 L8.5 8.5 L16 1" fill="none" stroke="#bfbfbf" stroke-width="2"/></svg>
<div class="a" style="left:2515px;top:1535px;font-size:26px;line-height:26px;color:#9a9a9a;font-weight:400;">跳转至</div>
<div class="a" style="left:2612px;top:1515px;width:99px;height:63px;border:2px solid #d9d9d9;border-radius:8px;background:#fff"></div>
<div class="a" style="left:2723px;top:1535px;font-size:26px;line-height:26px;color:#8c8c8c;font-weight:400;">页</div>
<div class="a" style="left:2758px;top:1514px;width:112px;height:64px;background:#7a6ef8;border-radius:8px;box-shadow:0 4px 6px rgba(0,0,0,.06)"></div>
<div class="a" style="left:2784px;top:1534px;font-size:26px;line-height:26px;color:rgba(255,255,255,.9);font-weight:400;">跳&nbsp;转</div>
<div class="a" style="left:2920px;top:133px;width:20px;height:304px;background:#c4c4c4;border-radius:10px"></div>
<div class="a" style="left:0px;top:0px;width:2940px;height:1596px;background:rgba(0,0,0,.45)"></div>
<div class="a" style="left:0px;top:0px;width:2940px;height:2px;background:#dcdcdc"></div>
<div class="a" style="left:0px;top:0px;width:1px;height:1596px;background:rgba(255,255,255,.15)"></div>
<div class="a" style="left:2939px;top:132px;width:1px;height:1440px;background:rgba(255,255,255,.12)"></div>
<svg class="a" style="left:2917px;top:1573px" width="23" height="23" viewBox="0 0 23 23"><path d="M23 0 V23 H0 A22 22 0 0 0 22 1 Z" fill="#56a283"/></svg>
<div class="a" style="left:210px;top:202px;width:2520px;height:841px;background:#fff;border-radius:10px;box-shadow:0 12px 36px rgba(0,0,0,.16),0 4px 12px rgba(0,0,0,.08)"></div>
<div class="a" style="left:1327px;top:266px;font-size:36px;line-height:36px;color:#333;font-weight:400;letter-spacing:-0.2px;-webkit-text-stroke:0.9px #333">配置跟卖监控店铺</div>
<svg class="a" style="left:2665px;top:245px" width="23" height="23" viewBox="0 0 23 23"><path d="M1.2 1.2 L21.8 21.8 M21.8 1.2 L1.2 21.8" stroke="#8a8a8a" stroke-width="2.4"/></svg>
<div class="a" style="left:338px;top:399px;width:2264px;height:104px;background:#fafafa;border-radius:14px 14px 0 0;border-bottom:2px solid #efefef"></div>
<div class="a" style="left:576px;top:430px;width:2px;height:40px;background:#ebebeb"></div>
<div class="a" style="left:716px;top:430px;width:2px;height:40px;background:#ebebeb"></div>
<div class="a" style="left:916px;top:430px;width:2px;height:40px;background:#ebebeb"></div>
<div class="a" style="left:1077px;top:430px;width:2px;height:40px;background:#ebebeb"></div>
<div class="a" style="left:1377px;top:430px;width:2px;height:40px;background:#ebebeb"></div>
<div class="a" style="left:1743px;top:430px;width:2px;height:40px;background:#ebebeb"></div>
<div class="a" style="left:346px;top:438px;font-size:26px;line-height:26px;color:#8c8c8c;font-weight:400;-webkit-text-stroke:0.4px #8c8c8c">店铺简称</div>
<div class="a" style="left:623px;top:438px;font-size:26px;line-height:26px;color:#8c8c8c;font-weight:400;-webkit-text-stroke:0.4px #8c8c8c">区域</div>
<div class="a" style="left:766px;top:438px;font-size:26px;line-height:26px;color:#8c8c8c;font-weight:400;-webkit-text-stroke:0.4px #8c8c8c">店铺状态</div>
<div class="a" style="left:932px;top:438px;font-size:26px;line-height:26px;color:#8c8c8c;font-weight:400;-webkit-text-stroke:0.4px #8c8c8c">开启监控</div>
<svg class="a" style="left:1042px;top:440px" width="21" height="21" viewBox="0 0 21 21"><circle cx="10.5" cy="10.5" r="9.4" fill="none" stroke="#8a97c0" stroke-width="1.5"/><path d="M7.7 8.3 A2.8 2.8 0 1 1 10.5 11.1 V12.7" fill="none" stroke="#8a97c0" stroke-width="1.6"/><circle cx="10.5" cy="15.4" r="1" fill="#8a97c0"/></svg>
<div class="a" style="left:1098px;top:438px;font-size:26px;line-height:26px;color:#8c8c8c;font-weight:400;-webkit-text-stroke:0.4px #8c8c8c">开启时间（北京时间）</div>
<div class="a" style="left:1510px;top:438px;font-size:26px;line-height:26px;color:#8c8c8c;font-weight:400;-webkit-text-stroke:0.4px #8c8c8c">是否提醒</div>
<div class="a" style="left:1945px;top:438px;font-size:26px;line-height:26px;color:#8c8c8c;font-weight:400;-webkit-text-stroke:0.4px #8c8c8c">店铺</div>
<div class="a" style="left:1999.00px;top:437.88px;font-size:26px;line-height:26px;color:#8c8c8c;font-weight:400;letter-spacing:0.417px;-webkit-text-stroke:0.5px #8c8c8c">ASIN</div>
<div class="a" style="left:2061px;top:438px;font-size:26px;line-height:26px;color:#8c8c8c;font-weight:400;-webkit-text-stroke:0.4px #8c8c8c;letter-spacing:-0.4px">跟卖信息变动默认提醒设置</div>
<svg class="a" style="left:2378px;top:440px" width="21" height="21" viewBox="0 0 21 21"><circle cx="10.5" cy="10.5" r="9.4" fill="none" stroke="#8a97c0" stroke-width="1.5"/><path d="M7.7 8.3 A2.8 2.8 0 1 1 10.5 11.1 V12.7" fill="none" stroke="#8a97c0" stroke-width="1.6"/><circle cx="10.5" cy="15.4" r="1" fill="#8a97c0"/></svg>
<div class="a" style="left:338px;top:605px;width:2264px;height:2px;background:#f0f0f0"></div>
<div class="a" style="left:346px;top:542px;font-size:26px;line-height:26px;color:#262626;font-weight:400;">优</div>
<div class="a" style="left:373.50px;top:540.56px;font-size:28px;line-height:28px;color:#262626;font-weight:400;letter-spacing:-0.167px;">***K</div>
<div class="a" style="left:623px;top:542px;font-size:26px;line-height:26px;color:#262626;font-weight:400;">北美</div>
<div class="a" style="left:779px;top:542px;font-size:26px;line-height:26px;color:#262626;font-weight:400;">已授权</div>
<div class="a" style="left:970px;top:540px;width:56px;height:32px;background:#7367f0;border-radius:16px"></div>
<div class="a" style="left:997px;top:543px;width:26px;height:26px;background:#fff;border-radius:50%;box-shadow:0 2px 4px rgba(0,35,11,.2)"></div>
<div class="a" style="left:1097.55px;top:540.42px;font-size:27.5px;line-height:27.5px;color:#262626;font-weight:400;letter-spacing:0.386px;">2024-03-27 10:59:31</div>
<div class="a" style="left:1402px;top:540px;width:28px;height:28px;border:2px solid #d9d9d9;border-radius:50%;background:#fff"></div>
<div class="a" style="left:1446px;top:542px;font-size:26px;line-height:26px;color:#262626;font-weight:400;">不提醒</div>
<svg class="a" style="left:1556px;top:540px" width="28" height="28" viewBox="0 0 28 28"><circle cx="14" cy="14" r="14" fill="#7367f0"/><circle cx="14" cy="14" r="4" fill="#fff"/></svg>
<div class="a" style="left:1600px;top:542px;font-size:26px;line-height:26px;color:#262626;font-weight:400;">提醒</div>
<div class="a" style="left:1668px;top:542px;font-size:26px;line-height:26px;color:#7b6ff5;font-weight:400;">排除</div>
<svg class="a" style="left:1790px;top:538px" width="32" height="32" viewBox="0 0 32 32"><rect x="0" y="0" width="32" height="32" rx="6.5" fill="#7367f0"/><path d="M8.8 16.3 L13.6 21 L23.4 11.2" fill="none" stroke="#fff" stroke-width="3.8" stroke-linecap="round" stroke-linejoin="round"/></svg>
<div class="a" style="left:1838px;top:542px;font-size:26px;line-height:26px;color:#262626;font-weight:400;">新增跟卖</div>
<svg class="a" style="left:1974px;top:538px" width="32" height="32" viewBox="0 0 32 32"><rect x="0" y="0" width="32" height="32" rx="6.5" fill="#7367f0"/><path d="M8.8 16.3 L13.6 21 L23.4 11.2" fill="none" stroke="#fff" stroke-width="3.8" stroke-linecap="round" stroke-linejoin="round"/></svg>
<div class="a" style="left:2022px;top:542px;font-size:26px;line-height:26px;color:#262626;font-weight:400;">跟卖下架</div>
<svg class="a" style="left:2158px;top:538px" width="32" height="32" viewBox="0 0 32 32"><rect x="0" y="0" width="32" height="32" rx="6.5" fill="#7367f0"/><path d="M8.8 16.3 L13.6 21 L23.4 11.2" fill="none" stroke="#fff" stroke-width="3.8" stroke-linecap="round" stroke-linejoin="round"/></svg>
<div class="a" style="left:2204.75px;top:540.56px;font-size:28px;line-height:28px;color:#262626;font-weight:400;letter-spacing:0.400px;">BuyBox</div>
<div class="a" style="left:2304px;top:542px;font-size:26px;line-height:26px;color:#262626;font-weight:400;">变动</div>
<div class="a" style="left:2388px;top:538px;width:32px;height:32px;border:2px solid #d9d9d9;border-radius:6.5px;background:#fff"></div>
<div class="a" style="left:2436px;top:542px;font-size:26px;line-height:26px;color:#262626;font-weight:400;">价格变动</div>
<div class="a" style="left:338px;top:709px;width:2264px;height:2px;background:#f0f0f0"></div>
<div class="a" style="left:346px;top:646px;font-size:26px;line-height:26px;color:#262626;font-weight:400;">优</div>
<div class="a" style="left:373.50px;top:644.56px;font-size:28px;line-height:28px;color:#262626;font-weight:400;letter-spacing:2.125px;">***</div>
<div class="a" style="left:411px;top:646px;font-size:26px;line-height:26px;color:#262626;font-weight:400;">洲</div>
<div class="a" style="left:623px;top:646px;font-size:26px;line-height:26px;color:#262626;font-weight:400;">欧洲</div>
<div class="a" style="left:779px;top:646px;font-size:26px;line-height:26px;color:#262626;font-weight:400;">已授权</div>
<div class="a" style="left:970px;top:644px;width:56px;height:32px;background:#7367f0;border-radius:16px"></div>
<div class="a" style="left:997px;top:647px;width:26px;height:26px;background:#fff;border-radius:50%;box-shadow:0 2px 4px rgba(0,35,11,.2)"></div>
<div class="a" style="left:1096.25px;top:644.42px;font-size:27.5px;line-height:27.5px;color:#262626;font-weight:400;letter-spacing:0.447px;">2023-08-16 10:24:49</div>
<div class="a" style="left:1402px;top:644px;width:28px;height:28px;border:2px solid #d9d9d9;border-radius:50%;background:#fff"></div>
<div class="a" style="left:1446px;top:646px;font-size:26px;line-height:26px;color:#262626;font-weight:400;">不提醒</div>
<svg class="a" style="left:1556px;top:644px" width="28" height="28" viewBox="0 0 28 28"><circle cx="14" cy="14" r="14" fill="#7367f0"/><circle cx="14" cy="14" r="4" fill="#fff"/></svg>
<div class="a" style="left:1600px;top:646px;font-size:26px;line-height:26px;color:#262626;font-weight:400;">提醒</div>
<div class="a" style="left:1668px;top:646px;font-size:26px;line-height:26px;color:#7b6ff5;font-weight:400;">排除</div>
<svg class="a" style="left:1790px;top:642px" width="32" height="32" viewBox="0 0 32 32"><rect x="0" y="0" width="32" height="32" rx="6.5" fill="#7367f0"/><path d="M8.8 16.3 L13.6 21 L23.4 11.2" fill="none" stroke="#fff" stroke-width="3.8" stroke-linecap="round" stroke-linejoin="round"/></svg>
<div class="a" style="left:1838px;top:646px;font-size:26px;line-height:26px;color:#262626;font-weight:400;">新增跟卖</div>
<svg class="a" style="left:1974px;top:642px" width="32" height="32" viewBox="0 0 32 32"><rect x="0" y="0" width="32" height="32" rx="6.5" fill="#7367f0"/><path d="M8.8 16.3 L13.6 21 L23.4 11.2" fill="none" stroke="#fff" stroke-width="3.8" stroke-linecap="round" stroke-linejoin="round"/></svg>
<div class="a" style="left:2022px;top:646px;font-size:26px;line-height:26px;color:#262626;font-weight:400;">跟卖下架</div>
<svg class="a" style="left:2158px;top:642px" width="32" height="32" viewBox="0 0 32 32"><rect x="0" y="0" width="32" height="32" rx="6.5" fill="#7367f0"/><path d="M8.8 16.3 L13.6 21 L23.4 11.2" fill="none" stroke="#fff" stroke-width="3.8" stroke-linecap="round" stroke-linejoin="round"/></svg>
<div class="a" style="left:2204.75px;top:644.56px;font-size:28px;line-height:28px;color:#262626;font-weight:400;letter-spacing:0.400px;">BuyBox</div>
<div class="a" style="left:2304px;top:646px;font-size:26px;line-height:26px;color:#262626;font-weight:400;">变动</div>
<svg class="a" style="left:2388px;top:642px" width="32" height="32" viewBox="0 0 32 32"><rect x="0" y="0" width="32" height="32" rx="6.5" fill="#7367f0"/><path d="M8.8 16.3 L13.6 21 L23.4 11.2" fill="none" stroke="#fff" stroke-width="3.8" stroke-linecap="round" stroke-linejoin="round"/></svg>
<div class="a" style="left:2436px;top:646px;font-size:26px;line-height:26px;color:#262626;font-weight:400;">价格变动</div>
<div class="a" style="left:338px;top:813px;width:2264px;height:2px;background:#f0f0f0"></div>
<div class="a" style="left:346px;top:750px;font-size:26px;line-height:26px;color:#262626;font-weight:400;">优</div>
<div class="a" style="left:373.50px;top:748.56px;font-size:28px;line-height:28px;color:#262626;font-weight:400;letter-spacing:2.125px;">***</div>
<div class="a" style="left:411px;top:750px;font-size:26px;line-height:26px;color:#262626;font-weight:400;">本</div>
<div class="a" style="left:623px;top:750px;font-size:26px;line-height:26px;color:#262626;font-weight:400;">远东</div>
<div class="a" style="left:779px;top:750px;font-size:26px;line-height:26px;color:#262626;font-weight:400;">已授权</div>
<div class="a" style="left:970px;top:748px;width:56px;height:32px;background:#7367f0;border-radius:16px"></div>
<div class="a" style="left:997px;top:751px;width:26px;height:26px;background:#fff;border-radius:50%;box-shadow:0 2px 4px rgba(0,35,11,.2)"></div>
<div class="a" style="left:1099.75px;top:748.42px;font-size:27.5px;line-height:27.5px;color:#262626;font-weight:400;letter-spacing:0.044px;">2023-08-07 12:51:10</div>
<div class="a" style="left:1402px;top:748px;width:28px;height:28px;border:2px solid #d9d9d9;border-radius:50%;background:#fff"></div>
<div class="a" style="left:1446px;top:750px;font-size:26px;line-height:26px;color:#262626;font-weight:400;">不提醒</div>
<svg class="a" style="left:1556px;top:748px" width="28" height="28" viewBox="0 0 28 28"><circle cx="14" cy="14" r="14" fill="#7367f0"/><circle cx="14" cy="14" r="4" fill="#fff"/></svg>
<div class="a" style="left:1600px;top:750px;font-size:26px;line-height:26px;color:#262626;font-weight:400;">提醒</div>
<div class="a" style="left:1668px;top:750px;font-size:26px;line-height:26px;color:#7b6ff5;font-weight:400;">排除</div>
<svg class="a" style="left:1790px;top:746px" width="32" height="32" viewBox="0 0 32 32"><rect x="0" y="0" width="32" height="32" rx="6.5" fill="#7367f0"/><path d="M8.8 16.3 L13.6 21 L23.4 11.2" fill="none" stroke="#fff" stroke-width="3.8" stroke-linecap="round" stroke-linejoin="round"/></svg>
<div class="a" style="left:1838px;top:750px;font-size:26px;line-height:26px;color:#262626;font-weight:400;">新增跟卖</div>
<div class="a" style="left:1974px;top:746px;width:32px;height:32px;border:2px solid #d9d9d9;border-radius:6.5px;background:#fff"></div>
<div class="a" style="left:2022px;top:750px;font-size:26px;line-height:26px;color:#262626;font-weight:400;">跟卖下架</div>
<svg class="a" style="left:2158px;top:746px" width="32" height="32" viewBox="0 0 32 32"><rect x="0" y="0" width="32" height="32" rx="6.5" fill="#7367f0"/><path d="M8.8 16.3 L13.6 21 L23.4 11.2" fill="none" stroke="#fff" stroke-width="3.8" stroke-linecap="round" stroke-linejoin="round"/></svg>
<div class="a" style="left:2204.75px;top:748.56px;font-size:28px;line-height:28px;color:#262626;font-weight:400;letter-spacing:0.400px;">BuyBox</div>
<div class="a" style="left:2304px;top:750px;font-size:26px;line-height:26px;color:#262626;font-weight:400;">变动</div>
<svg class="a" style="left:2388px;top:746px" width="32" height="32" viewBox="0 0 32 32"><rect x="0" y="0" width="32" height="32" rx="6.5" fill="#7367f0"/><path d="M8.8 16.3 L13.6 21 L23.4 11.2" fill="none" stroke="#fff" stroke-width="3.8" stroke-linecap="round" stroke-linejoin="round"/></svg>
<div class="a" style="left:2436px;top:750px;font-size:26px;line-height:26px;color:#262626;font-weight:400;">价格变动</div>
<div class="a" style="left:338px;top:917px;width:2264px;height:2px;background:#f0f0f0"></div>
<div class="a" style="left:346.50px;top:852.56px;font-size:28px;line-height:28px;color:#262626;font-weight:400;letter-spacing:0.625px;">t***p</div>
<div class="a" style="left:623px;top:854px;font-size:26px;line-height:26px;color:#262626;font-weight:400;">远东</div>
<div class="a" style="left:779px;top:854px;font-size:26px;line-height:26px;color:#262626;font-weight:400;">已授权</div>
<div class="a" style="left:970px;top:852px;width:56px;height:32px;background:#bfbfbf;border-radius:16px"></div>
<div class="a" style="left:973px;top:855px;width:26px;height:26px;background:#fff;border-radius:50%;box-shadow:0 2px 4px rgba(0,35,11,.2)"></div>
<svg class="a" style="left:1428px;top:852px" width="28" height="28" viewBox="0 0 28 28"><circle cx="14" cy="14" r="14" fill="#7367f0"/><circle cx="14" cy="14" r="4" fill="#fff"/></svg>
<div class="a" style="left:1472px;top:854px;font-size:26px;line-height:26px;color:#262626;font-weight:400;">不提醒</div>
<div class="a" style="left:1582px;top:852px;width:28px;height:28px;border:2px solid #d9d9d9;border-radius:50%;background:#fff"></div>
<div class="a" style="left:1627px;top:854px;font-size:26px;line-height:26px;color:#262626;font-weight:400;">提醒</div>
<div class="a" style="left:1790px;top:850px;width:32px;height:32px;border:2px solid #dcdcdc;border-radius:6.5px;background:#f5f5f5"></div>
<div class="a" style="left:1838px;top:854px;font-size:26px;line-height:26px;color:#bfbfbf;font-weight:400;">新增跟卖</div>
<div class="a" style="left:1974px;top:850px;width:32px;height:32px;border:2px solid #dcdcdc;border-radius:6.5px;background:#f5f5f5"></div>
<div class="a" style="left:2022px;top:854px;font-size:26px;line-height:26px;color:#bfbfbf;font-weight:400;">跟卖下架</div>
<div class="a" style="left:2158px;top:850px;width:32px;height:32px;border:2px solid #dcdcdc;border-radius:6.5px;background:#f5f5f5"></div>
<div class="a" style="left:2204.75px;top:852.56px;font-size:28px;line-height:28px;color:#bfbfbf;font-weight:400;letter-spacing:0.400px;">BuyBox</div>
<div class="a" style="left:2304px;top:854px;font-size:26px;line-height:26px;color:#bfbfbf;font-weight:400;">变动</div>
<div class="a" style="left:2388px;top:850px;width:32px;height:32px;border:2px solid #dcdcdc;border-radius:6.5px;background:#f5f5f5"></div>
<div class="a" style="left:2436px;top:854px;font-size:26px;line-height:26px;color:#bfbfbf;font-weight:400;">价格变动</div>
<div class="a" style="left:0;top:156px;width:2940px;height:1440px;overflow:hidden;pointer-events:none"><div class="wm" style="left:-151.4px;top:-157.0px">M23/17185</div><div class="wm" style="left:-151.4px;top:-47.8px">M23/17185</div><div class="wm" style="left:-151.4px;top:61.4px">M23/17185</div><div class="wm" style="left:-151.4px;top:170.6px">M23/17185</div><div class="wm" style="left:-151.4px;top:279.8px">M23/17185</div><div class="wm" style="left:-151.4px;top:389.0px">M23/17185</div><div class="wm" style="left:-151.4px;top:498.2px">M23/17185</div><div class="wm" style="left:-151.4px;top:607.4px">M23/17185</div><div class="wm" style="left:-151.4px;top:716.6px">M23/17185</div><div class="wm" style="left:-151.4px;top:825.8px">M23/17185</div><div class="wm" style="left:-151.4px;top:935.0px">M23/17185</div><div class="wm" style="left:-151.4px;top:1044.2px">M23/17185</div><div class="wm" style="left:-151.4px;top:1153.4px">M23/17185</div><div class="wm" style="left:-151.4px;top:1262.6px">M23/17185</div><div class="wm" style="left:-151.4px;top:1371.8px">M23/17185</div><div class="wm" style="left:50.8px;top:-129.7px">M23/17185</div><div class="wm" style="left:50.8px;top:-20.5px">M23/17185</div><div class="wm" style="left:50.8px;top:88.7px">M23/17185</div><div class="wm" style="left:50.8px;top:197.9px">M23/17185</div><div class="wm" style="left:50.8px;top:307.1px">M23/17185</div><div class="wm" style="left:50.8px;top:416.3px">M23/17185</div><div class="wm" style="left:50.8px;top:525.5px">M23/17185</div><div class="wm" style="left:50.8px;top:634.7px">M23/17185</div><div class="wm" style="left:50.8px;top:743.9px">M23/17185</div><div class="wm" style="left:50.8px;top:853.1px">M23/17185</div><div class="wm" style="left:50.8px;top:962.3px">M23/17185</div><div class="wm" style="left:50.8px;top:1071.5px">M23/17185</div><div class="wm" style="left:50.8px;top:1180.7px">M23/17185</div><div class="wm" style="left:50.8px;top:1289.9px">M23/17185</div><div class="wm" style="left:50.8px;top:1399.1px">M23/17185</div><div class="wm" style="left:253.0px;top:-211.6px">M23/17185</div><div class="wm" style="left:253.0px;top:-102.4px">M23/17185</div><div class="wm" style="left:253.0px;top:6.8px">M23/17185</div><div class="wm" style="left:253.0px;top:116.0px">M23/17185</div><div class="wm" style="left:253.0px;top:225.2px">M23/17185</div><div class="wm" style="left:253.0px;top:334.4px">M23/17185</div><div class="wm" style="left:253.0px;top:443.6px">M23/17185</div><div class="wm" style="left:253.0px;top:552.8px">M23/17185</div><div class="wm" style="left:253.0px;top:662.0px">M23/17185</div><div class="wm" style="left:253.0px;top:771.2px">M23/17185</div><div class="wm" style="left:253.0px;top:880.4px">M23/17185</div><div class="wm" style="left:253.0px;top:989.6px">M23/17185</div><div class="wm" style="left:253.0px;top:1098.8px">M23/17185</div><div class="wm" style="left:253.0px;top:1208.0px">M23/17185</div><div class="wm" style="left:253.0px;top:1317.2px">M23/17185</div><div class="wm" style="left:253.0px;top:1426.4px">M23/17185</div><div class="wm" style="left:455.2px;top:-184.3px">M23/17185</div><div class="wm" style="left:455.2px;top:-75.1px">M23/17185</div><div class="wm" style="left:455.2px;top:34.1px">M23/17185</div><div class="wm" style="left:455.2px;top:143.3px">M23/17185</div><div class="wm" style="left:455.2px;top:252.5px">M23/17185</div><div class="wm" style="left:455.2px;top:361.7px">M23/17185</div><div class="wm" style="left:455.2px;top:470.9px">M23/17185</div><div class="wm" style="left:455.2px;top:580.1px">M23/17185</div><div class="wm" style="left:455.2px;top:689.3px">M23/17185</div><div class="wm" style="left:455.2px;top:798.5px">M23/17185</div><div class="wm" style="left:455.2px;top:907.7px">M23/17185</div><div class="wm" style="left:455.2px;top:1016.9px">M23/17185</div><div class="wm" style="left:455.2px;top:1126.1px">M23/17185</div><div class="wm" style="left:455.2px;top:1235.3px">M23/17185</div><div class="wm" style="left:455.2px;top:1344.5px">M23/17185</div><div class="wm" style="left:455.2px;top:1453.7px">M23/17185</div><div class="wm" style="left:657.4px;top:-157.0px">M23/17185</div><div class="wm" style="left:657.4px;top:-47.8px">M23/17185</div><div class="wm" style="left:657.4px;top:61.4px">M23/17185</div><div class="wm" style="left:657.4px;top:170.6px">M23/17185</div><div class="wm" style="left:657.4px;top:279.8px">M23/17185</div><div class="wm" style="left:657.4px;top:389.0px">M23/17185</div><div class="wm" style="left:657.4px;top:498.2px">M23/17185</div><div class="wm" style="left:657.4px;top:607.4px">M23/17185</div><div class="wm" style="left:657.4px;top:716.6px">M23/17185</div><div class="wm" style="left:657.4px;top:825.8px">M23/17185</div><div class="wm" style="left:657.4px;top:935.0px">M23/17185</div><div class="wm" style="left:657.4px;top:1044.2px">M23/17185</div><div class="wm" style="left:657.4px;top:1153.4px">M23/17185</div><div class="wm" style="left:657.4px;top:1262.6px">M23/17185</div><div class="wm" style="left:657.4px;top:1371.8px">M23/17185</div><div class="wm" style="left:859.6px;top:-129.7px">M23/17185</div><div class="wm" style="left:859.6px;top:-20.5px">M23/17185</div><div class="wm" style="left:859.6px;top:88.7px">M23/17185</div><div class="wm" style="left:859.6px;top:197.9px">M23/17185</div><div class="wm" style="left:859.6px;top:307.1px">M23/17185</div><div class="wm" style="left:859.6px;top:416.3px">M23/17185</div><div class="wm" style="left:859.6px;top:525.5px">M23/17185</div><div class="wm" style="left:859.6px;top:634.7px">M23/17185</div><div class="wm" style="left:859.6px;top:743.9px">M23/17185</div><div class="wm" style="left:859.6px;top:853.1px">M23/17185</div><div class="wm" style="left:859.6px;top:962.3px">M23/17185</div><div class="wm" style="left:859.6px;top:1071.5px">M23/17185</div><div class="wm" style="left:859.6px;top:1180.7px">M23/17185</div><div class="wm" style="left:859.6px;top:1289.9px">M23/17185</div><div class="wm" style="left:859.6px;top:1399.1px">M23/17185</div><div class="wm" style="left:1061.8px;top:-211.6px">M23/17185</div><div class="wm" style="left:1061.8px;top:-102.4px">M23/17185</div><div class="wm" style="left:1061.8px;top:6.8px">M23/17185</div><div class="wm" style="left:1061.8px;top:116.0px">M23/17185</div><div class="wm" style="left:1061.8px;top:225.2px">M23/17185</div><div class="wm" style="left:1061.8px;top:334.4px">M23/17185</div><div class="wm" style="left:1061.8px;top:443.6px">M23/17185</div><div class="wm" style="left:1061.8px;top:552.8px">M23/17185</div><div class="wm" style="left:1061.8px;top:662.0px">M23/17185</div><div class="wm" style="left:1061.8px;top:771.2px">M23/17185</div><div class="wm" style="left:1061.8px;top:880.4px">M23/17185</div><div class="wm" style="left:1061.8px;top:989.6px">M23/17185</div><div class="wm" style="left:1061.8px;top:1098.8px">M23/17185</div><div class="wm" style="left:1061.8px;top:1208.0px">M23/17185</div><div class="wm" style="left:1061.8px;top:1317.2px">M23/17185</div><div class="wm" style="left:1061.8px;top:1426.4px">M23/17185</div><div class="wm" style="left:1264.0px;top:-184.3px">M23/17185</div><div class="wm" style="left:1264.0px;top:-75.1px">M23/17185</div><div class="wm" style="left:1264.0px;top:34.1px">M23/17185</div><div class="wm" style="left:1264.0px;top:143.3px">M23/17185</div><div class="wm" style="left:1264.0px;top:252.5px">M23/17185</div><div class="wm" style="left:1264.0px;top:361.7px">M23/17185</div><div class="wm" style="left:1264.0px;top:470.9px">M23/17185</div><div class="wm" style="left:1264.0px;top:580.1px">M23/17185</div><div class="wm" style="left:1264.0px;top:689.3px">M23/17185</div><div class="wm" style="left:1264.0px;top:798.5px">M23/17185</div><div class="wm" style="left:1264.0px;top:907.7px">M23/17185</div><div class="wm" style="left:1264.0px;top:1016.9px">M23/17185</div><div class="wm" style="left:1264.0px;top:1126.1px">M23/17185</div><div class="wm" style="left:1264.0px;top:1235.3px">M23/17185</div><div class="wm" style="left:1264.0px;top:1344.5px">M23/17185</div><div class="wm" style="left:1264.0px;top:1453.7px">M23/17185</div><div class="wm" style="left:1466.2px;top:-157.0px">M23/17185</div><div class="wm" style="left:1466.2px;top:-47.8px">M23/17185</div><div class="wm" style="left:1466.2px;top:61.4px">M23/17185</div><div class="wm" style="left:1466.2px;top:170.6px">M23/17185</div><div class="wm" style="left:1466.2px;top:279.8px">M23/17185</div><div class="wm" style="left:1466.2px;top:389.0px">M23/17185</div><div class="wm" style="left:1466.2px;top:498.2px">M23/17185</div><div class="wm" style="left:1466.2px;top:607.4px">M23/17185</div><div class="wm" style="left:1466.2px;top:716.6px">M23/17185</div><div class="wm" style="left:1466.2px;top:825.8px">M23/17185</div><div class="wm" style="left:1466.2px;top:935.0px">M23/17185</div><div class="wm" style="left:1466.2px;top:1044.2px">M23/17185</div><div class="wm" style="left:1466.2px;top:1153.4px">M23/17185</div><div class="wm" style="left:1466.2px;top:1262.6px">M23/17185</div><div class="wm" style="left:1466.2px;top:1371.8px">M23/17185</div><div class="wm" style="left:1668.4px;top:-129.7px">M23/17185</div><div class="wm" style="left:1668.4px;top:-20.5px">M23/17185</div><div class="wm" style="left:1668.4px;top:88.7px">M23/17185</div><div class="wm" style="left:1668.4px;top:197.9px">M23/17185</div><div class="wm" style="left:1668.4px;top:307.1px">M23/17185</div><div class="wm" style="left:1668.4px;top:416.3px">M23/17185</div><div class="wm" style="left:1668.4px;top:525.5px">M23/17185</div><div class="wm" style="left:1668.4px;top:634.7px">M23/17185</div><div class="wm" style="left:1668.4px;top:743.9px">M23/17185</div><div class="wm" style="left:1668.4px;top:853.1px">M23/17185</div><div class="wm" style="left:1668.4px;top:962.3px">M23/17185</div><div class="wm" style="left:1668.4px;top:1071.5px">M23/17185</div><div class="wm" style="left:1668.4px;top:1180.7px">M23/17185</div><div class="wm" style="left:1668.4px;top:1289.9px">M23/17185</div><div class="wm" style="left:1668.4px;top:1399.1px">M23/17185</div><div class="wm" style="left:1870.6px;top:-211.6px">M23/17185</div><div class="wm" style="left:1870.6px;top:-102.4px">M23/17185</div><div class="wm" style="left:1870.6px;top:6.8px">M23/17185</div><div class="wm" style="left:1870.6px;top:116.0px">M23/17185</div><div class="wm" style="left:1870.6px;top:225.2px">M23/17185</div><div class="wm" style="left:1870.6px;top:334.4px">M23/17185</div><div class="wm" style="left:1870.6px;top:443.6px">M23/17185</div><div class="wm" style="left:1870.6px;top:552.8px">M23/17185</div><div class="wm" style="left:1870.6px;top:662.0px">M23/17185</div><div class="wm" style="left:1870.6px;top:771.2px">M23/17185</div><div class="wm" style="left:1870.6px;top:880.4px">M23/17185</div><div class="wm" style="left:1870.6px;top:989.6px">M23/17185</div><div class="wm" style="left:1870.6px;top:1098.8px">M23/17185</div><div class="wm" style="left:1870.6px;top:1208.0px">M23/17185</div><div class="wm" style="left:1870.6px;top:1317.2px">M23/17185</div><div class="wm" style="left:1870.6px;top:1426.4px">M23/17185</div><div class="wm" style="left:2072.8px;top:-184.3px">M23/17185</div><div class="wm" style="left:2072.8px;top:-75.1px">M23/17185</div><div class="wm" style="left:2072.8px;top:34.1px">M23/17185</div><div class="wm" style="left:2072.8px;top:143.3px">M23/17185</div><div class="wm" style="left:2072.8px;top:252.5px">M23/17185</div><div class="wm" style="left:2072.8px;top:361.7px">M23/17185</div><div class="wm" style="left:2072.8px;top:470.9px">M23/17185</div><div class="wm" style="left:2072.8px;top:580.1px">M23/17185</div><div class="wm" style="left:2072.8px;top:689.3px">M23/17185</div><div class="wm" style="left:2072.8px;top:798.5px">M23/17185</div><div class="wm" style="left:2072.8px;top:907.7px">M23/17185</div><div class="wm" style="left:2072.8px;top:1016.9px">M23/17185</div><div class="wm" style="left:2072.8px;top:1126.1px">M23/17185</div><div class="wm" style="left:2072.8px;top:1235.3px">M23/17185</div><div class="wm" style="left:2072.8px;top:1344.5px">M23/17185</div><div class="wm" style="left:2072.8px;top:1453.7px">M23/17185</div><div class="wm" style="left:2275.0px;top:-157.0px">M23/17185</div><div class="wm" style="left:2275.0px;top:-47.8px">M23/17185</div><div class="wm" style="left:2275.0px;top:61.4px">M23/17185</div><div class="wm" style="left:2275.0px;top:170.6px">M23/17185</div><div class="wm" style="left:2275.0px;top:279.8px">M23/17185</div><div class="wm" style="left:2275.0px;top:389.0px">M23/17185</div><div class="wm" style="left:2275.0px;top:498.2px">M23/17185</div><div class="wm" style="left:2275.0px;top:607.4px">M23/17185</div><div class="wm" style="left:2275.0px;top:716.6px">M23/17185</div><div class="wm" style="left:2275.0px;top:825.8px">M23/17185</div><div class="wm" style="left:2275.0px;top:935.0px">M23/17185</div><div class="wm" style="left:2275.0px;top:1044.2px">M23/17185</div><div class="wm" style="left:2275.0px;top:1153.4px">M23/17185</div><div class="wm" style="left:2275.0px;top:1262.6px">M23/17185</div><div class="wm" style="left:2275.0px;top:1371.8px">M23/17185</div><div class="wm" style="left:2477.2px;top:-129.7px">M23/17185</div><div class="wm" style="left:2477.2px;top:-20.5px">M23/17185</div><div class="wm" style="left:2477.2px;top:88.7px">M23/17185</div><div class="wm" style="left:2477.2px;top:197.9px">M23/17185</div><div class="wm" style="left:2477.2px;top:307.1px">M23/17185</div><div class="wm" style="left:2477.2px;top:416.3px">M23/17185</div><div class="wm" style="left:2477.2px;top:525.5px">M23/17185</div><div class="wm" style="left:2477.2px;top:634.7px">M23/17185</div><div class="wm" style="left:2477.2px;top:743.9px">M23/17185</div><div class="wm" style="left:2477.2px;top:853.1px">M23/17185</div><div class="wm" style="left:2477.2px;top:962.3px">M23/17185</div><div class="wm" style="left:2477.2px;top:1071.5px">M23/17185</div><div class="wm" style="left:2477.2px;top:1180.7px">M23/17185</div><div class="wm" style="left:2477.2px;top:1289.9px">M23/17185</div><div class="wm" style="left:2477.2px;top:1399.1px">M23/17185</div><div class="wm" style="left:2679.4px;top:-211.6px">M23/17185</div><div class="wm" style="left:2679.4px;top:-102.4px">M23/17185</div><div class="wm" style="left:2679.4px;top:6.8px">M23/17185</div><div class="wm" style="left:2679.4px;top:116.0px">M23/17185</div><div class="wm" style="left:2679.4px;top:225.2px">M23/17185</div><div class="wm" style="left:2679.4px;top:334.4px">M23/17185</div><div class="wm" style="left:2679.4px;top:443.6px">M23/17185</div><div class="wm" style="left:2679.4px;top:552.8px">M23/17185</div><div class="wm" style="left:2679.4px;top:662.0px">M23/17185</div><div class="wm" style="left:2679.4px;top:771.2px">M23/17185</div><div class="wm" style="left:2679.4px;top:880.4px">M23/17185</div><div class="wm" style="left:2679.4px;top:989.6px">M23/17185</div><div class="wm" style="left:2679.4px;top:1098.8px">M23/17185</div><div class="wm" style="left:2679.4px;top:1208.0px">M23/17185</div><div class="wm" style="left:2679.4px;top:1317.2px">M23/17185</div><div class="wm" style="left:2679.4px;top:1426.4px">M23/17185</div><div class="wm" style="left:2881.6px;top:-184.3px">M23/17185</div><div class="wm" style="left:2881.6px;top:-75.1px">M23/17185</div><div class="wm" style="left:2881.6px;top:34.1px">M23/17185</div><div class="wm" style="left:2881.6px;top:143.3px">M23/17185</div><div class="wm" style="left:2881.6px;top:252.5px">M23/17185</div><div class="wm" style="left:2881.6px;top:361.7px">M23/17185</div><div class="wm" style="left:2881.6px;top:470.9px">M23/17185</div><div class="wm" style="left:2881.6px;top:580.1px">M23/17185</div><div class="wm" style="left:2881.6px;top:689.3px">M23/17185</div><div class="wm" style="left:2881.6px;top:798.5px">M23/17185</div><div class="wm" style="left:2881.6px;top:907.7px">M23/17185</div><div class="wm" style="left:2881.6px;top:1016.9px">M23/17185</div><div class="wm" style="left:2881.6px;top:1126.1px">M23/17185</div><div class="wm" style="left:2881.6px;top:1235.3px">M23/17185</div><div class="wm" style="left:2881.6px;top:1344.5px">M23/17185</div><div class="wm" style="left:2881.6px;top:1453.7px">M23/17185</div></div>
</body></html>
